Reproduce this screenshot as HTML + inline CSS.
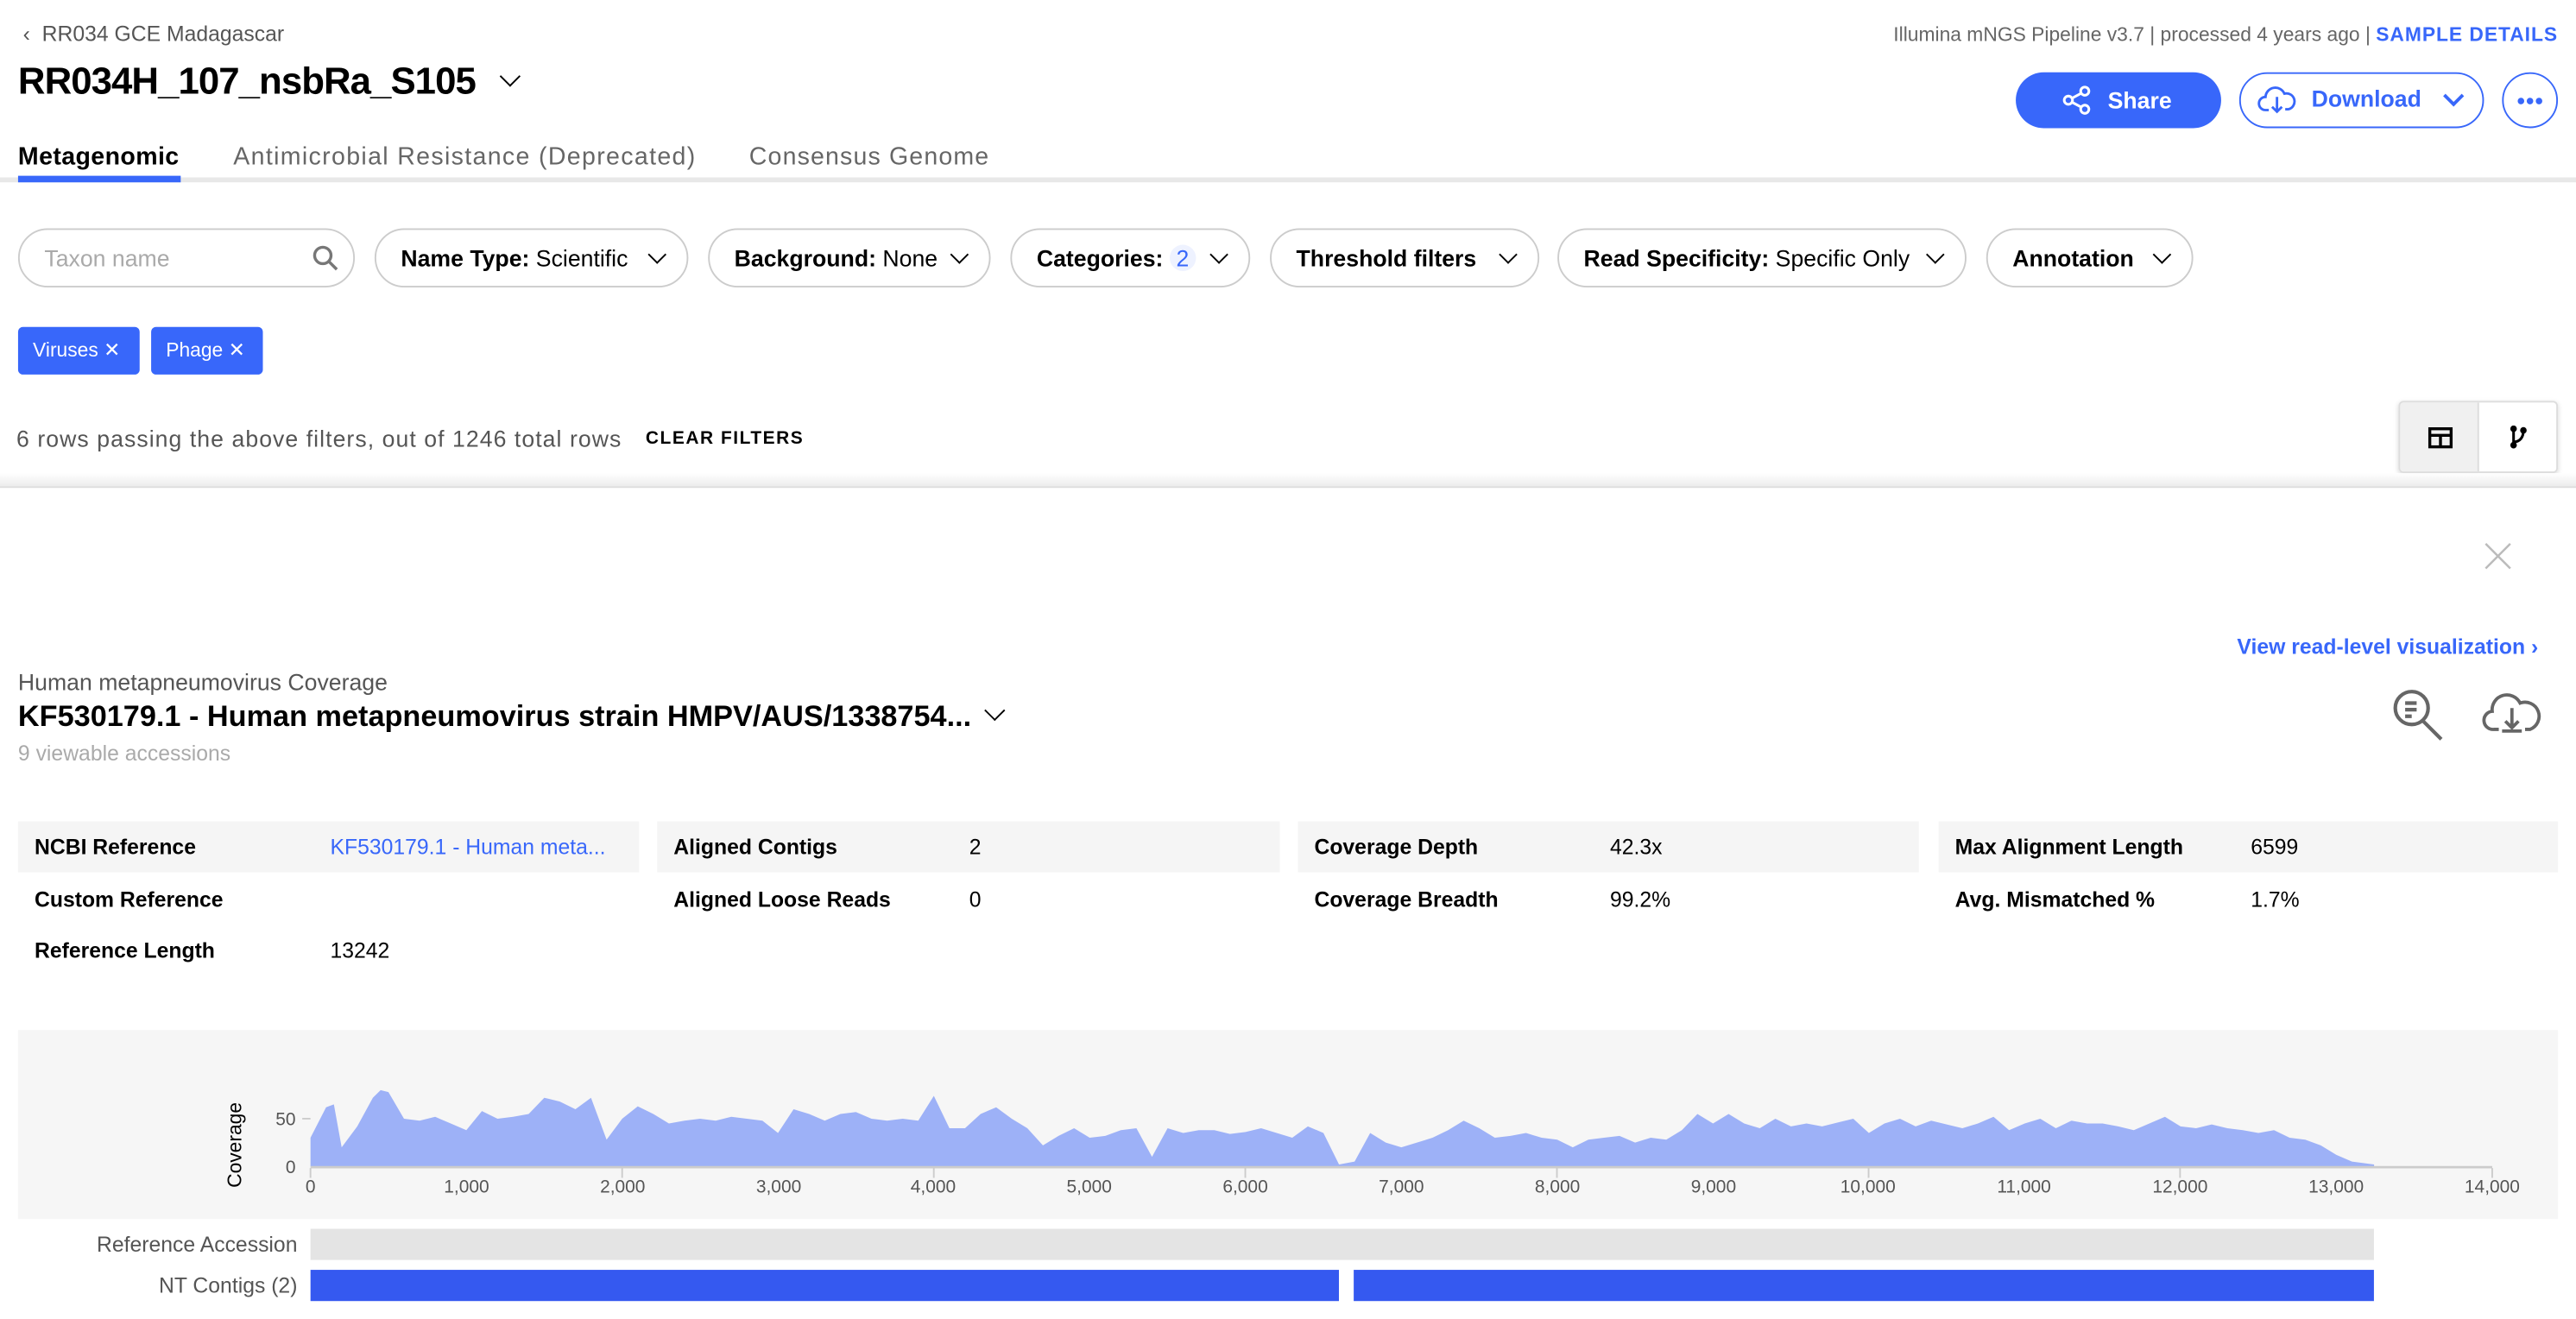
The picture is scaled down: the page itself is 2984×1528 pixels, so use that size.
<!DOCTYPE html>
<html><head><meta charset="utf-8"><style>
*{box-sizing:border-box;margin:0;padding:0}
body{width:2984px;height:1528px;overflow:hidden;background:#fff;font-family:"Liberation Sans",sans-serif;color:#000}
#s{width:1568px;height:803px;transform:scale(1.90306);transform-origin:0 0;position:relative}
.a{position:absolute;white-space:nowrap}
.pill{position:absolute;top:139px;height:36px;border:1px solid #ccc;border-radius:18px;font-size:14px;line-height:34px;padding-left:15px}
.pill b{font-weight:700}
.chev{position:absolute;right:14px;top:11px;width:8px;height:8px;border-right:1.6px solid #000;border-bottom:1.6px solid #000;transform:rotate(45deg)}
.tag{position:absolute;top:199px;height:29px;background:#3867fa;color:#fff;border-radius:3px;font-size:12px;line-height:29px;padding-left:9px}
.row{position:absolute;height:31px;font-size:13px;line-height:31px}
.row b{position:absolute;left:10px;font-weight:700}
.row span{position:absolute;left:190px}
.sh{background:#f5f5f5}
.tk{position:absolute;top:717px;font-size:11px;color:#555;transform:translateX(-50%)}
</style></head><body><div id="s">
<div class="a" style="left:14px;top:13px;font-size:13px;color:#555">‹&nbsp; RR034 GCE Madagascar</div>
<div class="a" style="left:11px;top:36px;font-size:23px;font-weight:700;letter-spacing:-0.5px">RR034H_107_nsbRa_S105</div>
<div class="a" style="left:306px;top:42px;width:9px;height:9px;border-right:1.6px solid #000;border-bottom:1.6px solid #000;transform:rotate(45deg)"></div>
<div class="a" style="right:11px;top:14px;font-size:12px;color:#666">Illumina mNGS Pipeline v3.7 | processed 4 years ago | <span style="color:#3867fa;font-weight:700;letter-spacing:0.5px">SAMPLE DETAILS</span></div>
<div class="a" style="left:1227px;top:44px;width:125px;height:34px;border-radius:17px;background:#3867fa;color:#fff;font-size:14px;font-weight:700;line-height:34px;padding-left:56px">Share
<svg style="position:absolute;left:28px;top:8px" width="18" height="18" viewBox="0 0 18 18" fill="none" stroke="#fff" stroke-width="1.6"><circle cx="4" cy="9" r="2.5"/><circle cx="14" cy="3.5" r="2.5"/><circle cx="14" cy="14.5" r="2.5"/><path d="M6.2 7.8l5.6-3M6.2 10.2l5.6 3"/></svg></div>
<div class="a" style="left:1363px;top:44px;width:149px;height:34px;border-radius:17px;border:1.5px solid #3867fa;color:#3867fa;font-size:14px;font-weight:700;line-height:31px;padding-left:43px">Download
<svg style="position:absolute;left:10px;top:6px" width="24" height="20" viewBox="0 0 24 20" fill="none" stroke="#3867fa" stroke-width="1.5"><path d="M7 16H5a4 4 0 0 1 0-8 6 6 0 0 1 11.5-2 4.5 4.5 0 0 1 2.5 9.5h-2"/><path d="M12 8v9M9 14l3 3 3-3"/></svg>
<div style="position:absolute;right:13px;top:9px;width:9px;height:9px;border-right:2px solid #3867fa;border-bottom:2px solid #3867fa;transform:rotate(45deg)"></div></div>
<div class="a" style="left:1523px;top:44px;width:34px;height:34px;border-radius:50%;border:1.5px solid #3867fa">
<svg style="position:absolute;left:8px;top:14px" width="16" height="5" viewBox="0 0 16 5" fill="#3867fa"><circle cx="2.5" cy="2.5" r="2"/><circle cx="8" cy="2.5" r="2"/><circle cx="13.5" cy="2.5" r="2"/></svg></div>
<div class="a" style="left:0;top:108px;width:1568px;height:3px;background:#e8e8e8"></div>
<div class="a" style="left:11px;top:87px;font-size:15px;font-weight:700;letter-spacing:0.2px">Metagenomic</div>
<div class="a" style="left:11px;top:107px;width:99px;height:4px;background:#3867fa"></div>
<div class="a" style="left:142px;top:87px;font-size:15px;color:#666;letter-spacing:0.7px">Antimicrobial Resistance (Deprecated)</div>
<div class="a" style="left:456px;top:87px;font-size:15px;color:#666;letter-spacing:0.6px">Consensus Genome</div>
<div class="pill" style="left:11px;width:205px;color:#aaa">Taxon name
<svg style="position:absolute;right:9px;top:9px" width="16" height="16" viewBox="0 0 16 16" fill="none" stroke="#777" stroke-width="1.8"><circle cx="6.5" cy="6.5" r="5"/><path d="M10 10l5 5"/></svg></div>
<div class="pill" style="left:228px;width:191px"><b>Name Type:</b> Scientific<i class="chev"></i></div>
<div class="pill" style="left:431px;width:172px"><b>Background:</b> None<i class="chev"></i></div>
<div class="pill" style="left:615px;width:146px"><b>Categories:</b> <span style="color:#3867fa;background:#eef2ff;padding:0 4px;border-radius:8px">2</span><i class="chev"></i></div>
<div class="pill" style="left:773px;width:164px"><b>Threshold filters</b><i class="chev"></i></div>
<div class="pill" style="left:948px;width:249px"><b>Read Specificity:</b> Specific Only<i class="chev"></i></div>
<div class="pill" style="left:1209px;width:126px"><b>Annotation</b><i class="chev"></i></div>
<div class="tag" style="left:11px;width:74px">Viruses ✕</div>
<div class="tag" style="left:92px;width:68px">Phage ✕</div>
<div class="a" style="left:10px;top:259px;font-size:14px;color:#555;letter-spacing:0.55px">6 rows passing the above filters, out of 1246 total rows</div>
<div class="a" style="left:393px;top:261px;font-size:11px;font-weight:700;letter-spacing:0.8px">CLEAR FILTERS</div>
<div class="a" style="left:1460px;top:244px;width:97px;height:44px;border:1px solid #ddd;border-radius:3px;box-shadow:0 1px 3px rgba(0,0,0,.15);overflow:hidden">
<div style="position:absolute;left:0;top:0;width:48px;height:44px;background:#f0f0f0;border-right:1px solid #ddd"></div>
<svg style="position:absolute;left:17px;top:15px" width="15" height="13" viewBox="0 0 15 13" fill="none" stroke="#000" stroke-width="1.8"><rect x="1" y="1" width="13" height="11"/><path d="M1 5h13M7.5 5v7"/></svg>
<svg style="position:absolute;left:67px;top:14px" width="10" height="14" viewBox="0 0 10 14" fill="none" stroke="#000" stroke-width="1.6"><path d="M2 1v12M2 10c4 0 6-3 6-7"/><circle cx="2" cy="2" r="1.2" fill="#000"/><circle cx="8" cy="3" r="1.2" fill="#000"/><circle cx="2" cy="12" r="1.2" fill="#000"/></svg></div>
<div class="a" style="left:0;top:288px;width:1568px;height:8px;background:linear-gradient(#fff,#ececec)"></div>
<div class="a" style="left:0;top:296px;width:1568px;height:1px;background:#ddd"></div>
<svg class="a" style="left:1512px;top:330px" width="17" height="17" viewBox="0 0 17 17" stroke="#bbb" stroke-width="1.3"><path d="M1 1l15 15M16 1L1 16"/></svg>
<div class="a" style="right:23px;top:386px;font-size:13px;font-weight:700;color:#3867fa">View read-level visualization ›</div>
<div class="a" style="left:11px;top:407px;font-size:14px;color:#555">Human metapneumovirus Coverage</div>
<div class="a" style="left:11px;top:426px;font-size:18px;font-weight:700">KF530179.1 - Human metapneumovirus strain HMPV/AUS/1338754...</div>
<div class="a" style="left:601px;top:428px;width:9px;height:9px;border-right:1.6px solid #000;border-bottom:1.6px solid #000;transform:rotate(45deg)"></div>
<div class="a" style="left:11px;top:451px;font-size:13px;color:#aaa">9 viewable accessions</div>
<svg class="a" style="left:1455px;top:418px" width="34" height="34" viewBox="0 0 34 34" fill="none" stroke="#666" stroke-width="2.2"><circle cx="13" cy="13" r="10"/><path d="M20 21l11 11M9 10h7M9 14h7M9 18h4"/></svg>
<svg class="a" style="left:1511px;top:420px" width="36" height="28" viewBox="0 0 36 28" fill="none" stroke="#666" stroke-width="2"><path d="M10 24H7a5.5 5.5 0 0 1-1-11 9 9 0 0 1 17-5 6.5 6.5 0 0 1 6 16h-3"/><path d="M18 11v12M14 19l4 4 4-4M12 25h12"/></svg>
<div class="row sh" style="left:11px;top:500px;width:378px"><b>NCBI Reference</b><span style="color:#3867fa">KF530179.1 - Human meta...</span></div>
<div class="row" style="left:11px;top:532px;width:378px"><b>Custom Reference</b></div>
<div class="row" style="left:11px;top:563px;width:378px"><b>Reference Length</b><span>13242</span></div>
<div class="row sh" style="left:400px;top:500px;width:379px"><b>Aligned Contigs</b><span>2</span></div>
<div class="row" style="left:400px;top:532px;width:379px"><b>Aligned Loose Reads</b><span>0</span></div>
<div class="row sh" style="left:790px;top:500px;width:378px"><b>Coverage Depth</b><span>42.3x</span></div>
<div class="row" style="left:790px;top:532px;width:378px"><b>Coverage Breadth</b><span>99.2%</span></div>
<div class="row sh" style="left:1180px;top:500px;width:377px"><b>Max Alignment Length</b><span>6599</span></div>
<div class="row" style="left:1180px;top:532px;width:377px"><b>Avg. Mismatched %</b><span>1.7%</span></div>
<div class="a" style="left:11px;top:627px;width:1546px;height:115px;background:#f6f6f6"></div>
<svg class="a" style="left:0;top:0" width="1568" height="803">
<g transform="translate(189,710) scale(0.094857,-0.58)"><polygon fill="#9db1f7" points="0,0 0,30 100,62 150,65 200,20 300,42 400,72 450,80 500,78 600,50 700,48 800,52 900,45 1000,38 1100,58 1200,50 1300,52 1400,55 1500,72 1600,68 1700,60 1800,72 1900,28 2000,50 2100,63 2200,55 2300,45 2400,48 2500,50 2600,48 2700,52 2800,50 2900,48 3000,35 3100,60 3200,55 3300,48 3400,55 3500,57 3600,50 3700,48 3800,50 3900,48 4000,74 4100,40 4200,40 4300,55 4400,62 4500,50 4600,40 4700,22 4800,32 4900,40 5000,30 5100,32 5200,38 5300,40 5400,10 5500,40 5600,35 5700,38 5800,38 5900,34 6000,36 6100,40 6200,35 6300,30 6400,42 6500,35 6600,2 6700,5 6800,35 6900,25 7000,20 7100,25 7200,30 7300,38 7400,48 7500,40 7600,30 7700,32 7800,35 7900,30 8000,28 8100,20 8200,28 8300,30 8400,32 8500,25 8600,30 8700,28 8800,38 8900,55 9000,45 9100,55 9200,45 9300,40 9400,50 9500,42 9600,45 9700,42 9800,46 9900,50 10000,35 10100,45 10200,50 10300,42 10400,48 10500,44 10600,40 10700,45 10800,52 10900,38 11000,45 11100,50 11200,40 11300,48 11400,45 11500,45 11600,42 11700,38 11800,45 11900,52 12000,42 12100,40 12200,44 12300,40 12400,38 12500,35 12600,38 12700,30 12800,28 12900,22 13000,12 13100,5 13242,2 13242,0"/></g>
<path d="M189 710.5H1517" stroke="#ccc" stroke-width="1.5"/>
<path d="M184 681H189M189 711v6M378.7 711v6M568.4 711v6M758 711v6M947.7 711v6M1137.4 711v6M1327 711v6M1517 711v6" stroke="#ccc"/>
<text x="180" y="685" font-size="11" fill="#555" text-anchor="end" font-family="Liberation Sans">50</text>
<text x="180" y="714" font-size="11" fill="#555" text-anchor="end" font-family="Liberation Sans">0</text>
<text transform="translate(147,697) rotate(-90)" font-size="12" text-anchor="middle" font-family="Liberation Sans">Coverage</text>
</svg>
<div class="tk" style="left:189px">0</div><div class="tk" style="left:284px">1,000</div><div class="tk" style="left:379px">2,000</div><div class="tk" style="left:474px">3,000</div><div class="tk" style="left:568px">4,000</div><div class="tk" style="left:663px">5,000</div><div class="tk" style="left:758px">6,000</div><div class="tk" style="left:853px">7,000</div><div class="tk" style="left:948px">8,000</div><div class="tk" style="left:1043px">9,000</div><div class="tk" style="left:1137px">10,000</div><div class="tk" style="left:1232px">11,000</div><div class="tk" style="left:1327px">12,000</div><div class="tk" style="left:1422px">13,000</div><div class="tk" style="left:1517px">14,000</div>
<div class="a" style="right:1387px;top:750px;font-size:13px;color:#555">Reference Accession</div>
<div class="a" style="left:189px;top:748px;width:1256px;height:19px;background:#e4e4e4"></div>
<div class="a" style="right:1387px;top:775px;font-size:13px;color:#555">NT Contigs (2)</div>
<div class="a" style="left:189px;top:773px;width:626px;height:19px;background:#3559f0"></div>
<div class="a" style="left:824px;top:773px;width:621px;height:19px;background:#3559f0"></div>
</div></body></html>
